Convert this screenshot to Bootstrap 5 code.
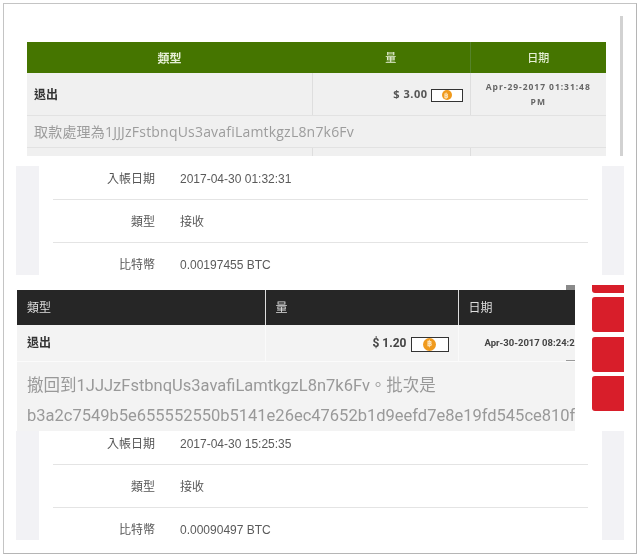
<!DOCTYPE html>
<html lang="zh-Hant">
<head>
<meta charset="utf-8">
<title>交易</title>
<link href="https://cdn.jsdelivr.net/npm/bootstrap@5.3.0/dist/css/bootstrap.min.css" rel="stylesheet">
<style>
html,body{margin:0;background:#fff;overflow:hidden}
body{font-family:"Liberation Sans","Noto Sans CJK TC",sans-serif;color:#333;filter:blur(.45px)}
.shot-frame{position:relative;margin:3px;width:634px;height:551px;border:1px solid #c4c4c4;border-right-color:#b5b5b5;border-bottom-color:#b5b5b5;overflow:hidden;background:#fff}
.shot-scroll{position:absolute;left:616px;top:12px;width:3px;height:140px;background:#d2d2d2}
.green-wrap{margin:38px 0 0 23px;width:579px;height:114px;overflow:hidden}
.tx-table{table-layout:fixed;width:100%;margin:0;border-collapse:collapse}
.tx-table th,.tx-table td{padding:0;vertical-align:middle;border:0}
.green-table{font-family:"Open Sans","Noto Sans CJK TC",sans-serif}
.green-table th{background:#457500;color:#e6efd5;height:31px;padding-top:2px;text-align:center;font-size:12px;font-weight:700;box-shadow:none}
.green-table th.thin-h{font-size:11px;font-weight:500}
.green-table th.last-h{border-left:1px solid #55832a}
.green-table td{background:#f0f0f0;border-bottom:1px solid #e2e2e2;box-shadow:none}
.green-table td+td{border-left:1px solid #dedede}
.green-table .r-one td{height:42px}
.green-table .r-two td{height:32px;padding-left:7px;color:#9c9c9c;font-size:14px;letter-spacing:.2px}
.green-table .kind{padding:2px 0 0 7px;font-size:12px;font-weight:700;color:#333}
.amount-cell{text-align:right;white-space:nowrap}
.green-table .amount-cell{padding:1px 7px 0 0;font-size:11px;font-weight:700;color:#555;letter-spacing:.5px}
.green-table .when{padding:0 12px;text-align:center;font-size:8.5px;font-weight:700;line-height:15px;color:#666;letter-spacing:.95px}
.coin-box{display:inline-flex;align-items:center;justify-content:center;background:#fff;border:1px solid #333;vertical-align:middle;margin-left:3px}
.coin-dot{display:flex;align-items:center;justify-content:center;border-radius:50%;background:#f09a1d;color:#fde6c0;font-weight:700;line-height:1}
.coin-sm{width:32px;height:13px}
.coin-sm .coin-dot{width:10px;height:10px;font-size:7px}
.coin-lg{width:38px;height:15px;margin-left:4px}
.coin-lg .coin-dot{width:13px;height:13px;font-size:8px}
.detail-band{margin:10px 0 0 12px;width:608px;height:109px;overflow:hidden;display:flex;font-size:12px;color:#4d4d4d}
.side-l{width:23px;background:#f2f2f5}
.side-r{width:22px;background:#f2f2f5}
.detail-main{flex:1;padding:0 14px}
.detail-row{display:flex;line-height:24px;padding:10px 0 8px;border-bottom:1px solid #e4e4e4}
.detail-row:first-child{padding:1px 0 8px}
.detail-row:last-child{border-bottom:0}
.detail-key{width:102px;text-align:right;color:#555}
.detail-val{margin-left:25px;color:#5a5a5a}
.dark-band{margin-top:10px;height:146px;display:flex;overflow:hidden}
.dark-wrap{position:relative;margin-left:13px;width:558px;padding-top:5px;overflow:hidden}
.dark-tab{position:absolute;right:0;top:0;width:9px;height:5px;background:#8a8a8a}
.dark-dash{position:absolute;right:0;top:75px;width:9px;height:1px;background:#9a9a9a}
.dark-table{font-family:Roboto,"Noto Sans CJK TC",sans-serif}
.dark-table th{background:#262626;color:#ddd;height:35px;padding-left:10px;font-size:12px;font-weight:400;box-shadow:none}
.dark-table th+th{border-left:1px solid #ddd}
.dark-table td{background:#f3f3f3;box-shadow:none}
.dark-table .r-one td{height:36px;border-bottom:1px solid #fbfbfb}
.dark-table .r-one td+td{border-left:1px solid #fafafa}
.dark-table .kind{padding:1px 0 0 10px;font-size:12px;font-weight:700;color:#333}
.dark-table .amount-cell{padding:1px 9px 0 0;font-size:12px;font-weight:700;color:#444}
.dark-table .when{padding:1px 0 0 26px;font-size:9.5px;font-weight:700;color:#444;white-space:nowrap;overflow:hidden}
.dark-table .memo{padding:9px 0 0 10px;height:70px;font-size:16.5px;line-height:30px;color:#999;white-space:nowrap;overflow:hidden;vertical-align:top}
.red-stack{margin-left:17px;width:32px;display:flex;flex-direction:column;gap:4.5px;margin-top:-27.5px}
.red-tile{display:block;flex:none;height:35px;background:#d81e2a;border-radius:3px 0 0 3px}
.corner-a,.corner-b{position:absolute;background:#8f8f8f}
.corner-a{left:-1px;top:-1px;width:12px;height:1px}
.corner-b{right:-1px;bottom:-1px;width:12px;height:1px}
</style>
</head>
<body>
<div class="shot-frame">
  <span class="corner-a"></span><span class="corner-b"></span>
  <div class="shot-scroll"></div>

  <div class="green-wrap">
    <table class="table tx-table green-table">
      <colgroup><col style="width:285px"><col style="width:158px"><col style="width:136px"></colgroup>
      <thead><tr><th>類型</th><th class="thin-h">量</th><th class="thin-h last-h">日期</th></tr></thead>
      <tbody>
        <tr class="r-one"><td class="kind">退出</td><td class="amount-cell">$ 3.00<span class="coin-box coin-sm"><span class="coin-dot">฿</span></span></td><td class="when">Apr-29-2017 01:31:48 PM</td></tr>
        <tr class="r-two"><td colspan="3">取款處理為1JJJzFstbnqUs3avafiLamtkgzL8n7k6Fv</td></tr>
        <tr class="r-one"><td></td><td></td><td></td></tr>
      </tbody>
    </table>
  </div>

  <div class="detail-band">
    <div class="side-l"></div>
    <div class="detail-main">
      <div class="detail-row"><span class="detail-key">入帳日期</span><span class="detail-val">2017-04-30 01:32:31</span></div>
      <div class="detail-row"><span class="detail-key">類型</span><span class="detail-val">接收</span></div>
      <div class="detail-row"><span class="detail-key">比特幣</span><span class="detail-val">0.00197455 BTC</span></div>
    </div>
    <div class="side-r"></div>
  </div>

  <div class="dark-band">
    <div class="dark-wrap">
      <span class="dark-tab"></span><span class="dark-dash"></span>
      <table class="table tx-table dark-table">
        <colgroup><col style="width:248px"><col style="width:193px"><col style="width:117px"></colgroup>
        <thead><tr><th>類型</th><th>量</th><th>日期</th></tr></thead>
        <tbody>
          <tr class="r-one"><td class="kind">退出</td><td class="amount-cell">$ 1.20<span class="coin-box coin-lg"><span class="coin-dot">฿</span></span></td><td class="when">Apr-30-2017 08:24:21 PM</td></tr>
          <tr><td class="memo" colspan="3">撤回到1JJJzFstbnqUs3avafiLamtkgzL8n7k6Fv。批次是<br>b3a2c7549b5e655552550b5141e26ec47652b1d9eefd7e8e19fd545ce810f</td></tr>
        </tbody>
      </table>
    </div>
    <div class="red-stack">
      <span class="red-tile"></span><span class="red-tile"></span><span class="red-tile"></span><span class="red-tile"></span>
    </div>
  </div>

  <div class="detail-band mt-0">
    <div class="side-l"></div>
    <div class="detail-main">
      <div class="detail-row"><span class="detail-key">入帳日期</span><span class="detail-val">2017-04-30 15:25:35</span></div>
      <div class="detail-row"><span class="detail-key">類型</span><span class="detail-val">接收</span></div>
      <div class="detail-row"><span class="detail-key">比特幣</span><span class="detail-val">0.00090497 BTC</span></div>
    </div>
    <div class="side-r"></div>
  </div>
</div>
<script src="https://cdn.jsdelivr.net/npm/bootstrap@5.3.0/dist/js/bootstrap.bundle.min.js"></script>
</body>
</html>
